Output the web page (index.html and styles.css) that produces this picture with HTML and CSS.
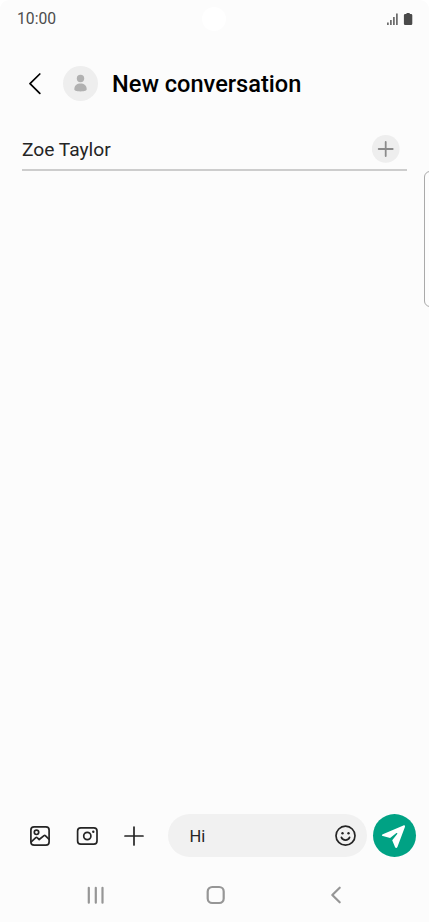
FILE: index.html
```html
<!DOCTYPE html>
<html lang="en">
<head>
    <meta charset="utf-8">
    <title>New conversation</title>
    <link rel="stylesheet" href="styles.css">
</head>
<body>
    <div class="screen">
        <div class="status-bar">
            <span class="time">10:00</span>
            <span class="camera-hole"></span>
            <svg class="status-icons" width="28" height="14" viewBox="0 0 28 14">
                <rect x="1.2" y="10.5" width="1.4" height="2.5"/>
                <rect x="4.2" y="8" width="1.4" height="5"/>
                <rect x="7.2" y="5" width="1.4" height="8"/>
                <rect x="10.2" y="1.5" width="1.4" height="11.5"/>
                <path d="M20.5 1h3.2v1H25a1.3 1.3 0 0 1 1.3 1.3v8.4A1.3 1.3 0 0 1 25 13h-5.8a1.3 1.3 0 0 1-1.3-1.3V3.3A1.3 1.3 0 0 1 19.2 2h1.3z"/>
            </svg>
        </div>

        <header class="header">
            <svg class="back" width="14" height="22" viewBox="0 0 14 22">
                <path d="M11.800 1L2 10.700l9.800 9.700"/>
            </svg>
            <svg class="avatar" width="36" height="36" viewBox="0 0 36 36">
                <circle cx="17.5" cy="17.5" r="17.5" fill="#eee"/>
                <circle cx="17.5" cy="12.5" r="3.7" fill="#b1b1b1"/>
                <path d="M11.3 23.3c0-3.900 2.700-5.900 6.200-5.900s6.200 2 6.200 5.900c0 1.200-1.500 2.100-6.200 2.100s-6.200-.9-6.200-2.100z" fill="#b1b1b1"/>
            </svg>
            <h1>New conversation</h1>
        </header>

        <div class="recipient">
            <span>Zoe Taylor</span>
            <svg width="28" height="28" viewBox="0 0 28 28">
                <circle cx="13.7" cy="13.9" r="13.9" fill="#eee"/>
                <path d="M13.7 7v14M6.7 14h14" stroke="#8b8b8b" stroke-width="1.8" stroke-linecap="round"/>
            </svg>
        </div>

        <main class="messages">
            <div class="edge-panel"></div>
        </main>

        <div class="composer">
            <div class="tools">
                <svg width="22" height="22" viewBox="0 0 22 22">
                    <rect x="1.9" y="1.9" width="18.2" height="18.2" rx="3.2"/>
                    <circle cx="7.5" cy="7.3" r="2.2"/>
                    <path d="M2.2 16.8l4.600-4.100c.5-.4.900-.4 1.300 0l2.100 1.800 4.800-3.900c.5-.4.900-.4 1.300 0l3.600 3.500"/>
                </svg>
                <svg width="22" height="22" viewBox="0 0 22 22">
                    <rect x="1.6" y="2.9" width="19.4" height="16.3" rx="3.2"/>
                    <circle cx="11.3" cy="11" r="3.6"/>
                    <circle cx="17.3" cy="6.7" r="1.2" class="dot"/>
                </svg>
                <svg width="22" height="22" viewBox="0 0 22 22">
                    <path d="M11 2v18M2 11h18"/>
                </svg>
            </div>
            <div class="message-input">
                <span>Hi</span>
                <svg width="22" height="22" viewBox="0 0 22 22">
                    <circle cx="11.5" cy="10.7" r="9.5"/>
                    <circle cx="8.5" cy="8.3" r="1.2" class="dot"/>
                    <circle cx="14.5" cy="8.3" r="1.2" class="dot"/>
                    <path d="M7.4 12.4c1.400 3.500 6.800 3.500 8.200 0"/>
                </svg>
            </div>
            <button class="send" aria-label="Send">
                <svg width="43" height="43" viewBox="0 0 43 43">
                    <path d="M9.8 20.2l20.600-8.800c1.100-.4 1.900.3 1.500 1.500L24.400 33c-.5 1.200-1.900 1.200-2.400 0l-2.800-6.800 5-6.300c.4-.6-.2-1.200-.8-.8l-6.300 5-7.300-2.100c-1.200-.4-1.200-1.400 0-1.800z" fill="#fff"/>
                </svg>
            </button>
        </div>

        <nav class="nav-bar">
            <svg width="20" height="20" viewBox="0 0 20 20">
                <path d="M2.8 2.8v14.900M9.800 2.800v14.900M16.500 2.800v14.900"/>
            </svg>
            <svg width="20" height="20" viewBox="0 0 20 20">
                <rect x="1.7" y="2" width="16" height="16" rx="4.5"/>
            </svg>
            <svg width="20" height="20" viewBox="0 0 20 20">
                <path d="M13.7 2.7L6.300 10l7.400 7.300"/>
            </svg>
        </nav>
    </div>
</body>
</html>
```
FILE: styles.css
```css
body {
    margin: 0;
    background: #fff;
    font-family: Roboto, "Liberation Sans", sans-serif;
    color: #252525;
}
svg {
    display: block;
    flex: none;
    fill: none;
}
.screen {
    display: flex;
    flex-direction: column;
    height: 922px;
    background: #fcfcfc;
    border-radius: 9px 9px 0 0;
    overflow: hidden;
}
.status-bar {
    display: grid;
    grid-template-columns: 185px 24px 1fr;
    align-items: center;
    height: 37px;
    padding: 0 15px 0 17px;
}
.time {
    font-size: 15.7px;
    color: #4d4d4d;
}
.camera-hole {
    width: 24px;
    height: 24px;
    border-radius: 50%;
    background: #fff;
}
.status-icons {
    justify-self: end;
    fill: #4a4a4a;
}
.header {
    display: flex;
    align-items: center;
    height: 93px;
    padding-left: 28px;
}
.back {
    stroke: #000;
    stroke-width: 1.7;
    stroke-linecap: round;
    stroke-linejoin: round;
}
.avatar {
    margin: 0 13px 0 21px;
}
h1 {
    margin: 0;
    font-size: 23.6px;
    font-weight: 500;
    line-height: 28px;
    color: #000;
}
.recipient {
    display: flex;
    justify-content: space-between;
    align-items: center;
    height: 38px;
    margin: 0 22px;
    padding: 0 7px 1px 0;
    border-bottom: 2px solid #cdcdcd;
    font-size: 19.2px;
    line-height: 24px;
}
.recipient span {
    padding-top: 2px;
}
.messages {
    flex: 1;
}
.edge-panel {
    width: 10px;
    height: 134px;
    margin: 0 -7px 0 auto;
    border: 1px solid #aaa;
    border-radius: 6px;
    background: #fdfdfd;
}
.composer {
    display: flex;
    align-items: center;
    height: 43px;
    padding: 0 13px 0 29px;
}
.tools {
    display: flex;
    gap: 25px;
    width: 139px;
    stroke: #252525;
    stroke-width: 1.7;
    stroke-linecap: round;
    stroke-linejoin: round;
}
.message-input {
    display: flex;
    flex: 1;
    justify-content: space-between;
    align-items: center;
    height: 43px;
    padding: 0 11px 0 21.5px;
    box-sizing: border-box;
    border-radius: 22px;
    background: #f1f1f1;
    font-size: 16.5px;
}
.message-input span {
    padding-top: 2px;
}
.message-input svg {
    stroke: #252525;
    stroke-width: 1.7;
    stroke-linecap: round;
}
.dot {
    fill: #252525;
    stroke: none;
}
.send {
    width: 43px;
    height: 43px;
    margin-left: 6px;
    padding: 0;
    border: none;
    border-radius: 50%;
    background: #00a284;
}
.nav-bar {
    display: flex;
    justify-content: space-between;
    align-items: center;
    height: 65px;
    padding: 10px 83px 0 86px;
    box-sizing: border-box;
    stroke: #969696;
    stroke-width: 2.2;
    stroke-linecap: round;
    stroke-linejoin: round;
}
```
